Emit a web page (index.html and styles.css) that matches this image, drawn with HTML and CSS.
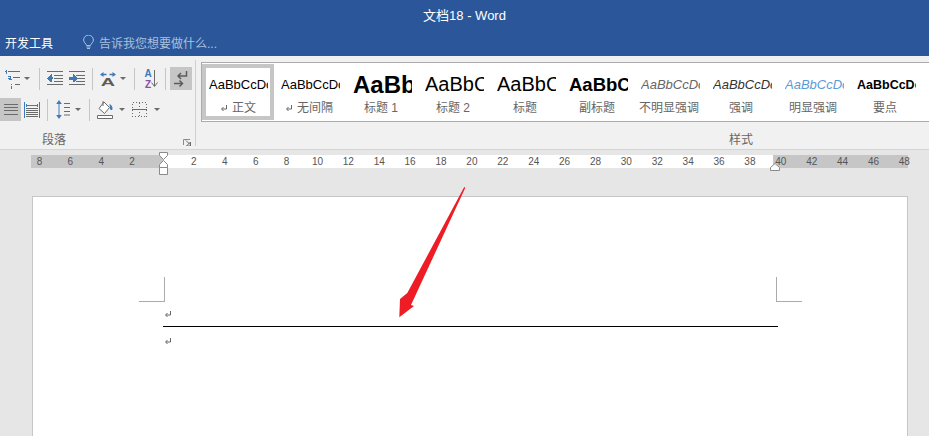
FILE: index.html
```html
<!DOCTYPE html>
<html lang="zh-CN">
<head>
<meta charset="utf-8">
<title>文档18 - Word</title>
<link rel="stylesheet" href="styles.css">
</head>
<body>
<header class="titlebar">文档18 - Word</header>
<nav class="tabbar">
  <span class="tab">开发工具</span>
  <svg class="bulb" width="11" height="15" viewBox="0 0 11 15"><path d="M3.5 10.5C3.2 8.5.6 7.6.6 5a4.9 4.9 0 0 1 9.8 0c0 2.600-2.600 3.500-2.900 5.500z" fill="none" stroke="#a9c0dc"/><path d="M3.500 12h4M4 13.500h3" stroke="#a9c0dc" fill="none"/></svg>
  <span class="tell">告诉我您想要做什么...</span>
</nav>
<section class="ribbon">
  <div class="group para">
    <div class="toolrow">
      <svg class="ic ml4" width="18" height="20" viewBox="0 0 18 20" shape-rendering="crispEdges"><path d="M2 1h1v4H2zM1 2h1v1H1zM4 7h3v1H4zM6 8h1v2H4V9h2zM4 9h1v2h3v-1H5zM7 15h1v1H7zM7 17h1v3H7z" fill="#3f7ab8"/><path d="M4 2h12v1H4zM9 8h7v1H9zM11 15h5v1h-5z" fill="#6b6b6b"/></svg>
      <i class="caret ml2"></i><i class="sep ml9"></i>
      <svg class="ic ml7" width="16" height="16" viewBox="0 0 16 16" shape-rendering="crispEdges"><path d="M0 0h16v1H0zM7 4h9v1H7zM7 7h9v1H7zM7 10h9v1H7zM0 13h16v1H0z" fill="#6b6b6b"/><path d="M5 3v3h1v2H5v3L4 11 0 7.500 4 3z" fill="#3f7ab8"/></svg>
      <svg class="ic ml6" width="16" height="16" viewBox="0 0 16 16" shape-rendering="crispEdges"><path d="M0 0h16v1H0zM7 4h9v1H7zM7 7h9v1H7zM7 10h9v1H7zM0 13h16v1H0z" fill="#6b6b6b"/><path d="M0 6h4V3l1 0 4 4.500L5 12l-1-1V9H0z" fill="#3f7ab8"/></svg>
      <i class="sep ml7"></i>
      <svg class="ic ml7" width="16" height="16" viewBox="0 0 16 16"><path d="M3 3.500h3.500M9.500 3.500H13" stroke="#3f7ab8" stroke-width="1.500" fill="none"/><path d="M3.500 1 0 3.500 3.500 6zM12.500 1 16 3.500 12.500 6z" fill="#3f7ab8"/><text class="glyph-a" transform="translate(8 15) scale(1.800 1)">A</text></svg>
      <i class="caret ml4"></i><i class="sep ml8"></i>
      <svg class="ic ml8" width="16" height="22" viewBox="0 0 16 22"><text x="5" y="9" class="glyph-s blue">A</text><text x="5" y="20" class="glyph-s purple">Z</text><path d="M11.500 2v16" stroke="#6b6b6b" fill="none"/><path d="M8.500 14.500l3 4 3-4" stroke="#6b6b6b" fill="none"/></svg>
      <i class="sep ml6"></i>
      <span class="toggle wide ml4"><svg width="16" height="16" viewBox="0 0 16 16"><path d="M13.500 0v5H5M8 2 5 5l3 3M1 12.500h8M6.500 9.500l3 3-3 3" stroke="#5c5c5c" stroke-width="1.500" fill="none"/></svg></span>
    </div>
    <div class="toolrow row2">
      <span class="toggle first"><svg width="14" height="11" viewBox="0 0 14 11" shape-rendering="crispEdges"><path d="M0 0h14v1H0zM0 3h14v1H0zM0 6h14v1H0zM0 10h14v1H0z" fill="#6b6b6b"/></svg></span>
      <svg class="ic ml3" width="16" height="16" viewBox="0 0 16 16" shape-rendering="crispEdges"><path d="M0 0h1v16H0zM15 0h1v16h-1z" fill="#3f7ab8"/><path d="M3 3h10v1H3zM3 1l-1 2.500L3 6zM13 1l1 2.500L13 6z" fill="#3f7ab8"/><path d="M2 6h12v1H2zM2 8h12v1H2zM2 10h12v1H2zM2 12h12v1H2zM2 14h12v1H2z" fill="#6b6b6b"/></svg>
      <i class="sep ml7"></i>
      <svg class="ic ml8" width="14" height="19" viewBox="0 0 14 19"><path d="M3 2v15" stroke="#3f7ab8" fill="none"/><path d="M3 0 .2 4h5.600zM3 19 .2 15h5.600z" fill="#3f7ab8"/><path d="M8 3.500h6M8 7.500h6M8 11.500h6M8 15h6" stroke="#6b6b6b" fill="none"/></svg>
      <i class="caret ml5"></i><i class="sep ml8"></i>
      <svg class="ic ml7" width="16" height="18" viewBox="0 0 16 18"><path d="M7 1 2 7.500l5.500 5 5-6z" fill="#fff" stroke="#6b6b6b"/><path d="M6 0v5" stroke="#6b6b6b" fill="none"/><path d="M12.500 3c2 1 3 2.500 3 4.500 0 1-.5 1.500-1.200 1.500-.8 0-1.300-.6-1.300-1.500z" fill="#3f7ab8"/><path d="M.5 14.500h15v3H.5z" fill="#fff" stroke="#6b6b6b"/></svg>
      <i class="caret ml6"></i>
      <svg class="ic ml7" width="15" height="15" viewBox="0 0 15 15" shape-rendering="crispEdges"><path d="M.5.500h14v14H.5zM7.500.500v14" fill="none" stroke="#6b6b6b" stroke-dasharray="1 2"/><path d="M0 7.500h15" stroke="#6b6b6b" fill="none"/></svg>
      <i class="caret ml7"></i>
    </div>
    <div class="grouplabel paralabel">
      <span>段落</span>
      <svg class="launcher" width="8" height="7" viewBox="0 0 8 7"><path d="M.5 6V.5H7" stroke="#8a8a8a" fill="none"/><path d="M3 1.500 7 5.500M7.500 3v4h-4z" stroke="#6b6b6b" fill="none"/></svg>
    </div>
  </div>
  <div class="group styles">
    <div class="gallery">
      <div class="style selected"><span class="sample body">AaBbCcDc</span><span class="label"><svg class="ret" width="8" height="7" viewBox="0 0 8 7"><path d="M6.500 0v4H2M3.500 2 1.500 4l2 2" stroke="#666" fill="none"/></svg>正文</span></div>
      <div class="style"><span class="sample body">AaBbCcDc</span><span class="label"><svg class="ret" width="8" height="7" viewBox="0 0 8 7"><path d="M6.500 0v4H2M3.500 2 1.500 4l2 2" stroke="#666" fill="none"/></svg>无间隔</span></div>
      <div class="style"><span class="sample h1">AaBb</span><span class="label">标题 1</span></div>
      <div class="style"><span class="sample h2">AaBbC</span><span class="label">标题 2</span></div>
      <div class="style"><span class="sample h2">AaBbC</span><span class="label">标题</span></div>
      <div class="style"><span class="sample sub">AaBbC</span><span class="label">副标题</span></div>
      <div class="style"><span class="sample subtle">AaBbCcDc</span><span class="label">不明显强调</span></div>
      <div class="style"><span class="sample em">AaBbCcDc</span><span class="label">强调</span></div>
      <div class="style"><span class="sample strong-em">AaBbCcDc</span><span class="label">明显强调</span></div>
      <div class="style"><span class="sample key">AaBbCcDc</span><span class="label">要点</span></div>
    </div>
    <div class="grouplabel">样式</div>
  </div>
</section>
<main class="canvas">
  <div class="ruler">
    <div class="nums">
      <span>8</span><span>6</span><span>4</span><span>2</span><span></span><span>2</span><span>4</span><span>6</span><span>8</span><span>10</span><span>12</span><span>14</span><span>16</span><span>18</span><span>20</span><span>22</span><span>24</span><span>26</span><span>28</span><span>30</span><span>32</span><span>34</span><span>36</span><span>38</span><span>40</span><span>42</span><span>44</span><span>46</span><span>48</span>
    </div>
    <svg class="marker m-left" width="11" height="24" viewBox="0 0 11 24"><path d="M1.500.500h8v3L5.500 7.500l-4-4zM1.500 15.500v-3l4-4 4 4v3zM1.500 15.500h8v7h-8z" fill="#fff" stroke="#8a8a8a"/></svg>
    <svg class="marker m-right" width="10" height="8" viewBox="0 0 10 8"><path d="M.5 7.500v-3l4.500-4 4.500 4v3z" fill="#fff" stroke="#8a8a8a"/></svg>
  </div>
  <article class="page">
    <div class="crops"><i class="crop crop-l"></i><i class="crop crop-r"></i></div>
    <div class="text">
      <p class="para-line ruled"><svg class="ret" width="8" height="7" viewBox="0 0 8 7"><path d="M6.500 0v4H2M3.500 2 1.500 4l2 2" stroke="#666" fill="none"/></svg></p>
      <p class="para-line"><svg class="ret" width="8" height="7" viewBox="0 0 8 7"><path d="M6.500 0v4H2M3.500 2 1.500 4l2 2" stroke="#666" fill="none"/></svg></p>
    </div>
  </article>
</main>
<svg class="arrow" width="70" height="134" viewBox="0 0 70 134"><path d="M66.200 0 67.300.800 13 118 16 119 1.300 130.300 2 112 9.300 106z" fill="#ee1c25"/></svg>
</body>
</html>
```
FILE: styles.css
```css
* { box-sizing: border-box; }
html, body { margin: 0; padding: 0; }
body {
  width: 929px;
  height: 436px;
  overflow: hidden;
  position: relative;
  background: #e6e6e6;
  font-family: "Liberation Sans", "Noto Sans CJK SC", sans-serif;
  font-size: 12px;
}
.titlebar {
  height: 30px;
  background: #2b579a;
  color: #fff;
  text-align: center;
  line-height: 31px;
  font-size: 13px;
}
.tabbar {
  height: 26px;
  background: #2b579a;
  display: flex;
  align-items: center;
  padding-left: 5px;
  padding-bottom: 1px;
}
.tab { color: #fff; font-size: 12px; }
.bulb { margin-left: 30px; }
.tell { color: #a9c0dc; margin-left: 5px; font-size: 12px; }

.ribbon {
  height: 94px;
  background: #f1f1f1;
  border-bottom: 1px solid #d4d4d4;
  display: flex;
}
.group { position: relative; display: flex; flex-direction: column; }
.para {
  width: 196px;
  border-right: 1px solid #cfcfcf;
  margin: 4px 0 3px;
  padding-top: 7px;
}
.toolrow { display: flex; align-items: center; height: 23px; }
.row2 { margin-top: 8px; }
.ic { flex: none; display: block; }
.sep { flex: none; width: 1px; height: 22px; background: #c6c6c6; }
.caret {
  flex: none;
  width: 0;
  height: 0;
  border-style: solid;
  border-width: 3px 3px 0;
  border-color: #6b6b6b transparent transparent;
}
.toggle {
  flex: none;
  display: flex;
  align-items: center;
  justify-content: center;
  height: 23px;
  background: #c6c6c6;
}
.toggle.wide { width: 22px; }
.toggle.first { width: 21px; }
.ml2 { margin-left: 2px; }
.ml3 { margin-left: 3px; }
.ml4 { margin-left: 4px; }
.ml5 { margin-left: 5px; }
.ml6 { margin-left: 6px; }
.ml7 { margin-left: 7px; }
.ml8 { margin-left: 8px; }
.ml9 { margin-left: 9px; }
.glyph-a { font: bold 11px "Liberation Sans", sans-serif; fill: #5c5c5c; text-anchor: middle; }
.glyph-s { font: bold 10px "Liberation Sans", sans-serif; text-anchor: middle; }
.blue { fill: #3f7ab8; }
.purple { fill: #8a4fa8; }

.grouplabel {
  color: #666;
  font-size: 12px;
  line-height: 12px;
  text-align: center;
  margin-top: auto;
}
.paralabel {
  display: flex;
  align-items: center;
  padding-left: 42px;
  padding-right: 4px;
  justify-content: space-between;
}
.launcher { margin-top: 6px; }

.styles { flex: 1; padding-top: 6px; padding-left: 5px; padding-bottom: 3px; min-width: 0; }
.gallery {
  height: 60px;
  background: #fff;
  border: 1px solid #ababab;
  border-right: 0;
  display: flex;
  align-items: center;
}
.styles .grouplabel { margin-left: 504px; width: 72px; }
.style {
  flex: none;
  width: 72px;
  height: 56px;
  padding-left: 7px;
  display: flex;
  flex-direction: column;
}
.style.selected { border: 4px solid #c6c6c6; padding-left: 3px; }
.style.selected .sample { height: 32px; padding-top: 1px; }
.style.selected .label { margin-left: -7px; }
.sample {
  display: flex;
  align-items: center;
  height: 36px;
  padding-top: 5px;
  width: 59px;
  flex: none;
  overflow: hidden;
  white-space: nowrap;
  color: #000;
  font-size: 13px;
}
.sample.h1 { font-size: 24px; font-weight: bold; }
.sample.h2 { font-size: 20px; }
.sample.sub { font-size: 18.500px; font-weight: bold; }
.sample.subtle { font-style: italic; color: #666; }
.sample.em { font-style: italic; color: #333; }
.sample.strong-em { font-style: italic; color: #5b9bd5; }
.sample.key { font-size: 12.500px; font-weight: bold; }
.label {
  color: #666;
  font-size: 12px;
  line-height: 16px;
  text-align: center;
  width: 72px;
  flex: none;
  margin-left: -8px;
  white-space: nowrap;
}
.ret { margin-right: 4px; }

.canvas { padding-top: 5px; }
.ruler {
  position: relative;
  margin-left: 31px;
  width: 877px;
  height: 13px;
  background: linear-gradient(to right, #c6c6c6 0, #c6c6c6 132px, #fff 132px, #fff 742px, #c6c6c6 742px);
}
.nums {
  display: flex;
  margin-left: -7px;
  font-size: 10px;
  line-height: 13px;
  color: #555;
}
.nums span { flex: none; width: 30.900px; text-align: center; }
.marker { position: absolute; }
.m-left { left: 127px; top: -3px; }
.m-right { left: 739px; top: 8px; }

.page {
  margin: 28px 0 0 32px;
  width: 876px;
  height: 260px;
  background: #fff;
  border: 1px solid #c6c6c6;
  padding: 80px 0 0 106px;
}
.crops { display: flex; justify-content: space-between; width: 663px; }
.crop { display: block; width: 26px; height: 25px; border-bottom: 1px solid #ababab; }
.crop-l { border-right: 1px solid #ababab; }
.crop-r { border-left: 1px solid #ababab; }
.text { margin-left: 24px; width: 615px; }
.para-line { margin: 0; height: 24px; display: flex; align-items: flex-start; padding: 9px 0 0 1px; }
.para-line + .para-line { padding-top: 11px; }
.ruled { border-bottom: 1px solid #000; height: 25px; }
.arrow { position: absolute; left: 398px; top: 187px; }
```
